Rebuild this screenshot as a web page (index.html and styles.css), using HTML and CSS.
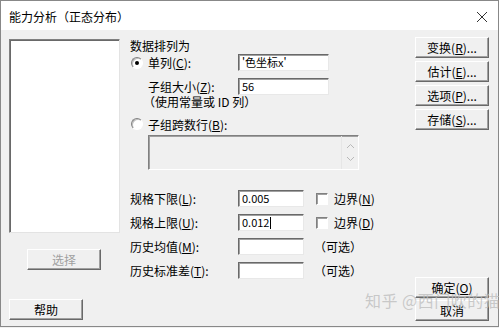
FILE: index.html
```html
<!DOCTYPE html>
<html lang="zh">
<head>
    <meta charset="UTF-8">
    <title>能力分析（正态分布）</title>
    <link rel="stylesheet" href="styles.css">
</head>
<body>
    <div class="window">
        <div class="titlebar">
            <span class="title">能力分析（正态分布）</span>
            <svg class="close" width="12" height="12" viewBox="0 0 12 12">
                <path d="M1 1 L11 11 M11 1 L1 11" stroke="#333" stroke-width="1" fill="none"/>
            </svg>
        </div>

        <div class="dialog">
            <div class="col-left">
                <div class="listbox"></div>
                <div class="btn btn-select disabled">选择</div>
                <div class="btn btn-help">帮助</div>
            </div>

            <div class="col-mid">
                <div class="caption">数据排列为</div>
                <div class="row row-radio">
                    <span class="radio checked"></span>
                    <span class="lbl">单列(<u>C</u>):</span>
                    <span class="field wide">'色坐标x'</span>
                </div>
                <div class="row row-sub">
                    <span class="lbl">子组大小(<u>Z</u>):</span>
                    <span class="field wide">56</span>
                </div>
                <div class="note">（使用常量或 ID 列）</div>
                <div class="row row-radio2">
                    <span class="radio"></span>
                    <span>子组跨数行(<u>B</u>):</span>
                </div>
                <div class="multi">
                    <div class="scroll">
                        <svg width="9" height="6" viewBox="0 0 9 6"><path d="M1 5 L4.5 1.5 L8 5" stroke="#b8b8b8" fill="none"/></svg>
                        <svg width="9" height="6" viewBox="0 0 9 6"><path d="M1 1 L4.5 4.5 L8 1" stroke="#b8b8b8" fill="none"/></svg>
                    </div>
                </div>

                <div class="spec">
                    <div class="row">
                        <span class="lbl-spec">规格下限(<u>L</u>):</span>
                        <span class="field">0.005</span>
                        <span class="check"></span>
                        <span>边界(<u>N</u>)</span>
                    </div>
                    <div class="row">
                        <span class="lbl-spec">规格上限(<u>U</u>):</span>
                        <span class="field">0.012<span class="caret"></span></span>
                        <span class="check"></span>
                        <span>边界(<u>D</u>)</span>
                    </div>
                    <div class="row">
                        <span class="lbl-spec">历史均值(<u>M</u>):</span>
                        <span class="field"></span>
                        <span class="optional">（可选）</span>
                    </div>
                    <div class="row">
                        <span class="lbl-spec">历史标准差(<u>T</u>):</span>
                        <span class="field"></span>
                        <span class="optional">（可选）</span>
                    </div>
                </div>
            </div>

            <div class="col-right">
                <div class="btn-group">
                    <div class="btn">变换(<u>R</u>)...</div>
                    <div class="btn">估计(<u>E</u>)...</div>
                    <div class="btn">选项(<u>P</u>)...</div>
                    <div class="btn">存储(<u>S</u>)...</div>
                </div>
                <div class="btn-group bottom">
                    <div class="btn">确定(<u>O</u>)</div>
                    <div class="btn">取消</div>
                </div>
            </div>
        </div>

        <div class="watermark">知乎 @西门吹的猫</div>
    </div>
</body>
</html>
```

FILE: styles.css
```css
body {
    margin: 0;
    background-color: #f0f0f0;
    font-family: "Noto Sans CJK SC", "Liberation Sans", sans-serif;
    font-size: 12px;
    color: #000;
    overflow: hidden;
}
.window {
    position: relative;
    width: 497px;
    height: 325px;
    border: 1px solid #888;
    background-color: #f0f0f0;
}
.titlebar {
    height: 29px;
    background-color: #fff;
    display: flex;
    align-items: center;
    justify-content: space-between;
    padding: 0 10px 0 8px;
}
.title {
    font-size: 12px;
    line-height: 14px;
    padding-top: 2px;
}
.close {
    margin-top: 2px;
}
.dialog {
    display: flex;
    height: 296px;
    padding: 9px 8px 0 8px;
    box-sizing: border-box;
}
u {
    text-decoration: underline;
    text-underline-offset: 1px;
}

/* colonne gauche */
.col-left {
    width: 111px;
    display: flex;
    flex-direction: column;
    padding-bottom: 6px;
}
.listbox {
    height: 194px;
    box-sizing: border-box;
    background-color: #fff;
    border: 1px solid;
    border-color: #808080 #e3e3e3 #e3e3e3 #808080;
    box-shadow: inset 1px 1px 0 #696969;
}
.btn {
    height: 21px;
    width: 74px;
    box-sizing: border-box;
    display: flex;
    align-items: center;
    justify-content: center;
    background-color: #f0f0f0;
    border: 1px solid;
    border-color: #fff #696969 #696969 #fff;
    box-shadow: inset -1px -1px 0 #a0a0a0;
    line-height: 14px;
}
.btn-select {
    margin: 16px 0 0 18px;
}
.btn.disabled {
    color: #a0a0a0;
}
.btn-help {
    margin-top: auto;
}

/* colonne centrale */
.col-mid {
    width: 285px;
    margin-left: 10px;
    display: flex;
    flex-direction: column;
}
.caption {
    line-height: 14px;
    height: 14px;
}
.row {
    display: flex;
    align-items: center;
    height: 17px;
}
.row-radio {
    margin-top: 1px;
}
.radio {
    width: 12px;
    height: 12px;
    box-sizing: border-box;
    border-radius: 50%;
    background-color: #fff;
    border: 1px solid;
    border-color: #808080 #fff #fff #808080;
    box-shadow: inset 1px 1px 0 #c0c0c0;
    margin: 0 5px 0 1px;
    display: flex;
    align-items: center;
    justify-content: center;
}
.radio.checked::after {
    content: '';
    width: 4px;
    height: 4px;
    border-radius: 50%;
    background-color: #000;
}
.lbl {
    width: 90px;
}
.row-sub {
    margin-top: 7px;
    padding-left: 18px;
}
.field {
    height: 17px;
    box-sizing: border-box;
    width: 66px;
    background-color: #fff;
    border: 1px solid;
    border-color: #696969 #e8e8e8 #e8e8e8 #696969;
    box-shadow: inset 1px 1px 0 #a0a0a0;
    padding: 0 0 0 3px;
    line-height: 15px;
    font-size: 11px;
    display: flex;
    align-items: center;
    white-space: nowrap;
}
.field.wide {
    width: 91px;
}
.caret {
    width: 1px;
    height: 12px;
    background-color: #000;
    margin-left: 1px;
}
.note {
    line-height: 14px;
    height: 14px;
    padding-left: 13px;
}
.row-radio2 {
    margin-top: 8px;
    height: 14px;
}
.multi {
    margin: 4px 0 0 18px;
    width: 211px;
    height: 35px;
    box-sizing: border-box;
    border: 1px solid;
    border-color: #808080 #fff #fff #808080;
    box-shadow: inset 1px 1px 0 #a0a0a0;
    display: flex;
    justify-content: flex-end;
}
.scroll {
    width: 16px;
    border-left: 1px solid #e6e6e6;
    display: flex;
    flex-direction: column;
    align-items: center;
    justify-content: space-around;
    padding: 3px 0;
}
.spec {
    margin-top: 20px;
    display: flex;
    flex-direction: column;
    gap: 7px;
}
.lbl-spec {
    width: 108px;
}
.check {
    width: 12px;
    height: 12px;
    box-sizing: border-box;
    background-color: #fff;
    border: 1px solid;
    border-color: #808080 #fff #fff #808080;
    box-shadow: inset 1px 1px 0 #a0a0a0;
    margin: 0 6px 0 12px;
}
.optional {
    margin-left: 10px;
}

/* colonne droite */
.col-right {
    width: 74px;
    display: flex;
    flex-direction: column;
    justify-content: space-between;
    padding: 0 0 5px;
    margin-top: -2px;
}
.btn-group {
    display: flex;
    flex-direction: column;
    gap: 3px;
}
.btn-group.bottom {
    gap: 2px;
}

/* filigrane */
.watermark {
    position: absolute;
    left: 364px;
    top: 288px;
    font-size: 16px;
    line-height: 22px;
    white-space: nowrap;
    color: rgba(190, 190, 190, 0.8);
    letter-spacing: 0.5px;
}
```
